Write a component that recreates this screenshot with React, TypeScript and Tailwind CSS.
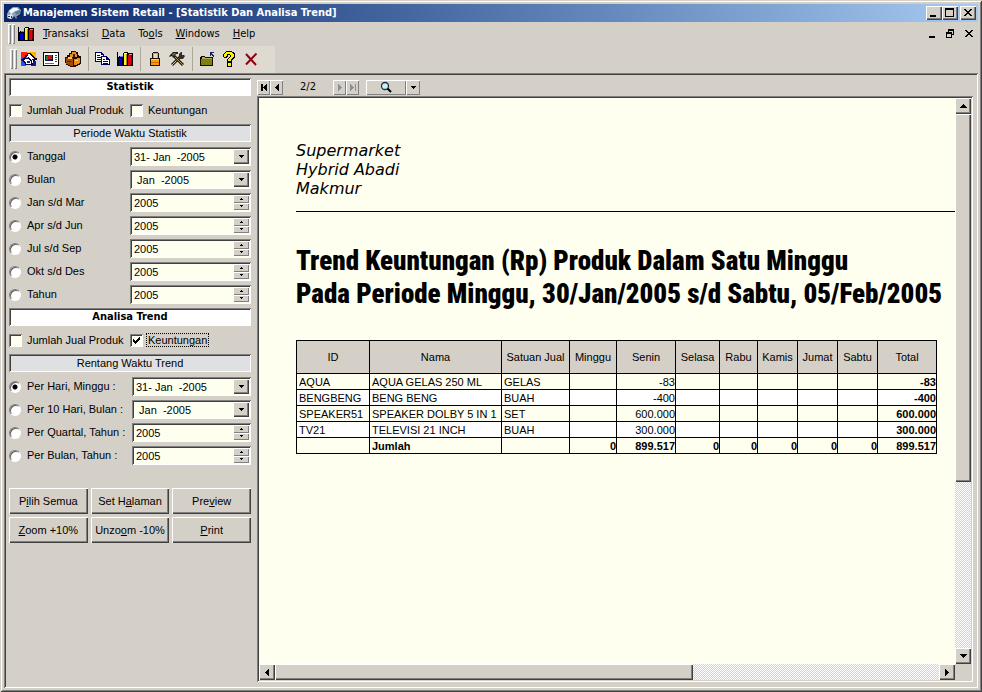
import { useState } from 'react'
import type { ReactNode } from 'react'
import clsx from 'clsx'

const raised =
  'bg-[#d4d0c8] shadow-[inset_1px_1px_0_#fff,inset_-1px_-1px_0_#404040,inset_-2px_-2px_0_#808080]'
const raisedThin = 'bg-[#d4d0c8] shadow-[inset_1px_1px_0_#fff,inset_-1px_-1px_0_#808080]'
const sunken =
  'shadow-[inset_1px_1px_0_#808080,inset_-1px_-1px_0_#fff,inset_2px_2px_0_#404040]'
const dither = 'bg-[repeating-conic-gradient(#ffffff_0_25%,#d4d0c8_0_50%)] bg-[length:2px_2px]'

const uiFont = "font-['Liberation_Sans',sans-serif]"
const menuFont = "font-['DejaVu_Sans_Condensed','DejaVu_Sans',sans-serif]"

/* ---------- icons ---------- */

function Glyph({ children, size = 16 }: { children: ReactNode; size?: number }) {
  return (
    <svg
      width={size}
      height={size}
      viewBox={`0 0 ${size} ${size}`}
      shapeRendering="crispEdges"
      className="shrink-0"
      aria-hidden="true"
    >
      {children}
    </svg>
  )
}

function Arrow({ dir, color = '#000' }: { dir: 'up' | 'down' | 'left' | 'right'; color?: string }) {
  const d = {
    up: 'M3 0h1v1h1v1h1v1h1v1H0V3h1V2h1V1h1z',
    down: 'M0 0h7v1H6v1H5v1H4v1H3V3H2V2H1V1H0z',
    left: 'M4 0v7H3V6H2V5H1V4H0V3h1V2h1V1h1V0z',
    right: 'M0 0v7h1V6h1V5h1V4h1V3H3V2H2V1H1V0z',
  }[dir]
  const wide = dir === 'up' || dir === 'down'
  return (
    <svg width={wide ? 7 : 4} height={wide ? 4 : 7} shapeRendering="crispEdges" aria-hidden="true">
      <path d={d} fill={color} />
    </svg>
  )
}

function SmallArrow({ dir }: { dir: 'up' | 'down' }) {
  return (
    <svg width="3" height="2" shapeRendering="crispEdges" aria-hidden="true">
      <path d={dir === 'up' ? 'M1 0h1v1h1v1H0V1h1z' : 'M0 0h3v1H2v1H1V1H0z'} fill="#000" />
    </svg>
  )
}

function SmallDrop() {
  return (
    <svg width="5" height="3" shapeRendering="crispEdges" aria-hidden="true">
      <path d="M0 0h5v1H4v1H3v1H2V2H1V1H0z" fill="#000" />
    </svg>
  )
}

function ChartIcon() {
  return (
    <Glyph>
      <path d="M0 1h1v13h15v1H0z" fill="#000" />
      <path d="M1 6l1-1h4v9H1z" fill="#000" />
      <path d="M2 7h3v7H2z" fill="#0000d0" />
      <path d="M3 5h3v1H3z" fill="#6080ff" />
      <path d="M6 2l1-1h4v13H6z" fill="#000" />
      <path d="M7 3h2v11H7z" fill="#ffee20" />
      <path d="M7 2h3v1H7z" fill="#fff8b0" />
      <path d="M9 3h1v11H9z" fill="#a09000" />
      <path d="M10 4l1-2h5v12h-6z" fill="#000" />
      <path d="M11 4h3v10h-3z" fill="#e00010" />
      <path d="M12 3h3v1h-3z" fill="#ff8080" />
      <path d="M14 4h1v9h-1z" fill="#800000" />
    </Glyph>
  )
}

function AppIcon() {
  return (
    <svg width="16" height="16" viewBox="0 0 16 16" className="shrink-0" aria-hidden="true">
      <path d="M1 9l2-4 4-3 5 0 3 3-1 4-3 2-3 0-2 3-5-1z" fill="#8fa6bc" />
      <path d="M3 6l4-3 4 0 2 2-4 1-4 3z" fill="#f4faff" />
      <path d="M9 7l5-2 0 3-4 2z" fill="#5f7892" />
      <path d="M2 10l4-1 1 2-2 3-3-1z" fill="#dfe8ee" />
      <path d="M2 11h2v1H2zM5 11h1v2H5z" fill="#25364c" />
      <path d="M8 11l2-1 1 3-1 1z" fill="#7d93a8" />
    </svg>
  )
}

function SalesIcon() {
  return (
    <Glyph>
      <path d="M0 1h6v5H0z" fill="#ff2010" />
      <path d="M6 1h9v6H6z" fill="#ffb400" />
      <path d="M0 6h5v9H0z" fill="#2050ff" />
      <path d="M10 10h5v5h-5z" fill="#102090" />
      <path d="M6 2h4v1h1v1h1v1h1v1h1v1h2v2h-2v1h-1v1h-1v3H4v-2H3v-1H2v-1H1V9H0V8h2V7h1V6h1V4h2z" fill="#000040" />
      <path d="M7 3h2v1h1v1h1v1h1v1h1v1h-2v1h1v3h-1V9h-1V8H9V7H8V6H6V5h1z" fill="#fff" />
      <path d="M4 8h4v1h1v1h1v3H5v-2H4v-1H3V9h1z" fill="#fff" />
      <path d="M6 10h3v2H6z" fill="#102090" />
      <path d="M5 6h2v1H5z" fill="#60a0ff" />
    </Glyph>
  )
}

function ReportIcon() {
  return (
    <Glyph>
      <path d="M0 1h16v14H0z" fill="#000" />
      <path d="M1 2h14v12H1z" fill="#fff" />
      <path d="M2 4h6v6H2z" fill="#202020" />
      <path d="M3 5h2v4H3z" fill="#208030" />
      <path d="M5 4h4v4H5z" fill="#d01020" />
      <path d="M5 8h4v2H5z" fill="#101080" />
      <path d="M9 4h1v6H9z" fill="#000" />
      <path d="M12 4h2v1h-2zM12 10h2v1h-2z" fill="#d01020" />
      <path d="M12 6h2v1h-2z" fill="#2040d0" />
      <path d="M12 8h2v1h-2z" fill="#208030" />
      <path d="M2 12h9v1H2z" fill="#606890" />
    </Glyph>
  )
}

function BagIcon() {
  return (
    <Glyph>
      <path d="M6 0h5v1h2v3h1v1h2v8h-1v1h-2v1h-2v1H5v-1H3v-1H1v-2H0V6h2V4h2V2h2z" fill="#1c0c00" />
      <path d="M7 1h4v2h1v3H5V3h2z" fill="#e09030" />
      <path d="M1 7h7v8H5v-1H3v-1H1z" fill="#a04c08" />
      <path d="M9 8h3V7h3v5h-1v1h-2v1H9z" fill="#e88c18" />
      <path d="M3 6h4v2H3z" fill="#f8c060" />
      <path d="M8 3h2v3H8z" fill="#502000" />
      <path d="M10 9h3v1h-3z" fill="#ffd070" />
      <path d="M2 10h4v1H2z" fill="#5c2400" />
    </Glyph>
  )
}

function CopyIcon() {
  return (
    <Glyph>
      <path d="M0 1h7v1h1v1h1v8H0z" fill="#000060" />
      <path d="M1 2h5v2h2v6H1z" fill="#fff" />
      <path d="M2 4h3v1H2zM2 6h4v1H2zM2 8h4v1H2z" fill="#000060" />
      <path d="M6 5h6v1h1v1h1v1h1v6H6z" fill="#000060" />
      <path d="M7 6h4v3h3v4H7z" fill="#fff" />
      <path d="M8 8h2v1H8zM8 10h5v1H8zM8 12h5v1H8z" fill="#000060" />
    </Glyph>
  )
}

function LockIcon() {
  return (
    <Glyph>
      <path d="M6 1h5v1h1v5h1v8H3V7h2V2h1z" fill="#201000" />
      <path d="M6 2h5v5H6z" fill="#e8a020" />
      <path d="M7 3h3v4H7z" fill="#dedad2" />
      <path d="M4 8h8v6H4z" fill="#ff9a00" />
      <path d="M4 8h8v1H4z" fill="#ffd060" />
      <path d="M4 11h8v1H4z" fill="#c87000" />
    </Glyph>
  )
}

function ToolsIcon() {
  return (
    <svg width="16" height="16" viewBox="0 0 16 16" className="shrink-0" aria-hidden="true">
      <path d="M3 14L11 6" stroke="#202020" strokeWidth="3" />
      <path d="M3 14L11 6" stroke="#c8c8b8" strokeWidth="1" />
      <path d="M10 7V3l2-2h1v3h2l1 1-2 3h-3z" fill="#303028" />
      <path d="M5 5l9 9" stroke="#302400" strokeWidth="3" />
      <path d="M6 6l8 8" stroke="#a89050" strokeWidth="1" />
      <path d="M0 6l1-2 3-3h5v2H7L4 7 3 5z" fill="#202020" />
      <path d="M3 3l2-1h2L4 5z" fill="#707058" />
    </svg>
  )
}

function FolderUpIcon() {
  return (
    <Glyph>
      <path d="M2 5h4v1h8v9H1V6h1z" fill="#101000" />
      <path d="M3 6h3v1h7v1H3z" fill="#b0b050" />
      <path d="M2 8h11v6H2z" fill="#808010" />
      <path d="M11 1h4v1h-2v1h1v1h1v2h-1V5h-1V4h-1v1h-1z" fill="#102070" />
    </Glyph>
  )
}

function HelpIcon() {
  return (
    <Glyph>
      <path d="M5 0h6v1h2v1h1v5h-1v1h-1v1h-1v2H6V8h1V7h1V6h1V4H7v2H6v1H3V6H2V3h1V2h1V1h1z" fill="#000" />
      <path d="M5 1h6v1h1v1h1v3h-1v1h-1v1h-1v2H7V8h1V7h1V6h1V4H9V3H6v2H5v1H3V3h1V2h1z" fill="#fff000" />
      <path d="M6 11h5v5H6z" fill="#000" />
      <path d="M7 12h3v3H7z" fill="#fff000" />
    </Glyph>
  )
}

function ExitIcon() {
  return (
    <svg width="16" height="16" viewBox="0 0 16 16" className="shrink-0" aria-hidden="true">
      <path d="M3 3l10 11M13.500 2.500L3 13.500" stroke="#900010" strokeWidth="2" fill="none" />
    </svg>
  )
}

function MinimizeIcon() {
  return (
    <Glyph size={10}>
      <path d="M1 7h6v2H1z" fill="#000" />
    </Glyph>
  )
}

function MaximizeIcon() {
  return (
    <Glyph size={10}>
      <path d="M0 0h9v9H0zM1 2v6h7V2z" fill="#000" fillRule="evenodd" />
    </Glyph>
  )
}

function RestoreIcon() {
  return (
    <Glyph size={10}>
      <path d="M2 0h6v6H6V5h1V2H3v1H2zM0 3h6v6H0zM1 5v3h4V5z" fill="#000" fillRule="evenodd" />
    </Glyph>
  )
}

function CloseIcon() {
  return (
    <Glyph size={10}>
      <path
        d="M1 1h2v1h1v1h2V2h1V1h2v1H8v1H7v1H6v1h1v1h1v1h1v1H7V7H6V6H4v1H3v1H1V7h1V6h1V5h1V4H3V3H2V2H1z"
        fill="#000"
      />
    </Glyph>
  )
}

function MagnifierIcon() {
  return (
    <svg width="12" height="12" viewBox="0 0 12 12" aria-hidden="true">
      <circle cx="5" cy="5" r="3.5" fill="#c8f4f8" stroke="#203040" strokeWidth="1.3" />
      <path d="M7.5 7.5l3.5 3.5" stroke="#000" strokeWidth="2" />
    </svg>
  )
}

/* ---------- window chrome ---------- */

// "&" marks the letter that is underlined as shortcut
function Mnemonic({ text }: { text: string }) {
  const [before, after] = text.split('&')
  return (
    <>
      {before}
      <span className="underline underline-offset-1">{after[0]}</span>
      {after.slice(1)}
    </>
  )
}

function Gripper() {
  return (
    <div className="flex h-5 shrink-0 gap-px" aria-hidden="true">
      <span className={clsx('w-[3px]', raisedThin)} />
      <span className={clsx('w-[3px]', raisedThin)} />
    </div>
  )
}

function TitleBar() {
  const btn = clsx('flex h-[14px] w-4 items-center justify-center', raised)
  return (
    <header className="flex h-[18px] shrink-0 items-center bg-linear-to-r from-[#0a246a] to-[#a6caf0] px-0.5">
      <AppIcon />
      <h1 className={clsx('ml-px flex-1 text-[11px] leading-4 font-bold whitespace-nowrap text-white', menuFont)}>
        Manajemen Sistem Retail - [Statistik Dan Analisa Trend]
      </h1>
      <button className={btn} aria-label="Minimize"><MinimizeIcon /></button>
      <button className={btn} aria-label="Maximize"><MaximizeIcon /></button>
      <button className={clsx('ml-0.5', btn)} aria-label="Close"><CloseIcon /></button>
    </header>
  )
}

const menus = ['&Transaksi', '&Data', 'To&ols', '&Windows', '&Help']

function MenuBar() {
  return (
    <nav className="flex h-6 shrink-0 items-center pl-1">
      <Gripper />
      <span className="mr-[9px] ml-[3px]"><ChartIcon /></span>
      <div className={clsx('flex flex-1 gap-[13px] text-[11px] leading-4', menuFont)}>
        {menus.map((m) => (
          <button key={m}><Mnemonic text={m} /></button>
        ))}
      </div>
      <div className="flex gap-2 pr-1">
        <button aria-label="Minimize document"><MinimizeIcon /></button>
        <button aria-label="Restore document"><RestoreIcon /></button>
        <button aria-label="Close document"><CloseIcon /></button>
      </div>
    </nav>
  )
}

const toolGroups = [
  [
    { label: 'Penjualan', icon: <SalesIcon /> },
    { label: 'Laporan', icon: <ReportIcon /> },
    { label: 'Produk', icon: <BagIcon /> },
  ],
  [
    { label: 'Salin', icon: <CopyIcon /> },
    { label: 'Statistik', icon: <ChartIcon /> },
  ],
  [
    { label: 'Kunci', icon: <LockIcon /> },
    { label: 'Peralatan', icon: <ToolsIcon /> },
  ],
  [
    { label: 'Buka', icon: <FolderUpIcon /> },
    { label: 'Bantuan', icon: <HelpIcon /> },
    { label: 'Keluar', icon: <ExitIcon /> },
  ],
]

function ToolBar() {
  return (
    <div className="flex h-[27px] shrink-0 pl-0.5">
      <div className="flex items-center bg-[#dedad2] pr-4 pb-0.5 pl-1">
        <Gripper />
        <div className="ml-1 flex items-center">
          {toolGroups.map((group, i) => (
            <div
              key={i}
              className={clsx('flex items-center gap-1.5', i > 0 && 'ml-[7px] border-l border-[#aca899] pl-1.5')}
            >
              {group.map((t) => (
                <button key={t.label} className="my-1" aria-label={t.label}>{t.icon}</button>
              ))}
            </div>
          ))}
        </div>
      </div>
    </div>
  )
}

/* ---------- side panel ---------- */

function Caption({ children, strong }: { children: ReactNode; strong?: boolean }) {
  return (
    <h2
      className={clsx(
        'h-[18px] text-center leading-[18px]',
        sunken,
        strong ? clsx('bg-white font-bold', menuFont) : 'bg-[#dfe0e1]',
      )}
    >
      {children}
    </h2>
  )
}

function Check({ label, initial = false, focused }: { label: string; initial?: boolean; focused?: boolean }) {
  const [on, setOn] = useState(initial)
  return (
    <label className="flex items-center gap-[3px]">
      <span className="grid place-items-center">
        <input
          type="checkbox"
          checked={on}
          onChange={() => setOn(!on)}
          className={clsx('col-start-1 row-start-1 size-[13px] appearance-none bg-[#fffff0]', sunken)}
        />
        {on && (
          <svg
            width="7"
            height="7"
            shapeRendering="crispEdges"
            className="pointer-events-none col-start-1 row-start-1"
            aria-hidden="true"
          >
            <path d="M0 2h1v1h1v1h1V3h1V2h1V1h1V0h1v3H6v1H5v1H4v1H3v1H2V6H1V5H0z" fill="#000" />
          </svg>
        )}
      </span>
      <span
        className={clsx(
          'border border-dotted px-px leading-3 whitespace-nowrap',
          focused ? 'border-black' : 'border-transparent',
        )}
      >
        {label}
      </span>
    </label>
  )
}

function CheckRow({ trend }: { trend?: boolean }) {
  return (
    <div className="grid h-7 grid-cols-2 items-center">
      <Check label="Jumlah Jual Produk" />
      <Check label="Keuntungan" initial={trend} focused={trend} />
    </div>
  )
}

function DateField({ label, value }: { label: string; value: string }) {
  return (
    <div className={clsx('flex h-[19px] bg-[#fffff0] p-0.5', sunken)}>
      <select aria-label={label} className="w-0 min-w-0 flex-1 appearance-none pt-0.5 pl-0.5 leading-[13px]">
        <option>{value}</option>
      </select>
      <span className={clsx('flex w-4 items-center justify-center', raised)}>
        <SmallDrop />
      </span>
    </div>
  )
}

function YearField({ label }: { label: string }) {
  const [year, setYear] = useState(2005)
  const btn = clsx('flex flex-1 items-center justify-center', raisedThin)
  return (
    <div className={clsx('flex h-[19px] bg-[#fffff0] p-0.5', sunken)}>
      <input
        type="text"
        aria-label={label}
        value={year}
        onChange={(e) => setYear(Number(e.target.value) || 0)}
        className="w-0 min-w-0 flex-1 pt-0.5 pl-0.5 leading-[13px]"
      />
      <span className="flex w-4 flex-col">
        <button className={btn} aria-label="Naik" onClick={() => setYear(year + 1)}><SmallArrow dir="up" /></button>
        <button className={btn} aria-label="Turun" onClick={() => setYear(year - 1)}><SmallArrow dir="down" /></button>
      </span>
    </div>
  )
}

type Period = { label: string; date?: string }

const statistik: Period[] = [
  { label: 'Tanggal', date: '31- Jan \u00a0-2005' },
  { label: 'Bulan', date: '\u00a0Jan \u00a0-2005' },
  { label: 'Jan s/d Mar' },
  { label: 'Apr s/d Jun' },
  { label: 'Jul s/d Sep' },
  { label: 'Okt s/d Des' },
  { label: 'Tahun' },
]

const trend: Period[] = [
  { label: 'Per Hari, Minggu :', date: '31- Jan \u00a0-2005' },
  { label: 'Per 10 Hari, Bulan :', date: '\u00a0Jan \u00a0-2005' },
  { label: 'Per Quartal, Tahun :' },
  { label: 'Per Bulan, Tahun :' },
]

function PeriodList({ name, items }: { name: string; items: Period[] }) {
  const [picked, setPicked] = useState(0)
  return (
    <div className="mt-[3px]">
      {items.map((p, i) => (
        <div key={p.label} className="flex h-[23px] items-center">
          <label
            className={clsx(
              'flex shrink-0 items-center gap-1.5 whitespace-nowrap',
              name === 'trend' ? 'w-[123px]' : 'w-[121px]',
            )}
          >
            <input
              type="radio"
              name={name}
              checked={picked === i}
              onChange={() => setPicked(i)}
              className="size-3 appearance-none rounded-full border border-[#808080] border-r-white border-b-white bg-white shadow-[inset_1px_1px_0_#606060] checked:bg-[radial-gradient(circle,#000_2px,#fff_3px)]"
            />
            {p.label}
          </label>
          <div className="min-w-0 flex-1">
            {p.date ? <DateField label={p.label} value={p.date} /> : <YearField label={p.label} />}
          </div>
        </div>
      ))}
    </div>
  )
}

const actions = ['P&ilih Semua', 'Set H&alaman', 'Pre&view', '&Zoom +10%', 'Unzo&om -10%', '&Print']

function SidePanel() {
  return (
    <aside className="w-[242px] shrink-0">
      <Caption strong>Statistik</Caption>
      <CheckRow />
      <Caption>Periode Waktu Statistik</Caption>
      <PeriodList name="statistik" items={statistik} />
      <div className="mt-0.5">
        <Caption strong>Analisa Trend</Caption>
      </div>
      <CheckRow trend />
      <Caption>Rentang Waktu Trend</Caption>
      <PeriodList name="trend" items={trend} />
      <div className="mt-[21px] grid grid-cols-3 gap-[3px]">
        {actions.map((a) => (
          <button key={a} className={clsx('h-[26px] whitespace-nowrap', raised)}>
            <Mnemonic text={a} />
          </button>
        ))}
      </div>
    </aside>
  )
}

/* ---------- report ---------- */

const columns = [
  { title: 'ID', width: 'w-[73px]' },
  { title: 'Nama', width: 'w-[132px]' },
  { title: 'Satuan Jual', width: 'w-[68px]' },
  { title: 'Minggu', width: 'w-[47px]' },
  { title: 'Senin', width: 'w-[59px]' },
  { title: 'Selasa', width: 'w-[44px]' },
  { title: 'Rabu', width: 'w-[38px]' },
  { title: 'Kamis', width: 'w-[40px]' },
  { title: 'Jumat', width: 'w-[40px]' },
  { title: 'Sabtu', width: 'w-[40px]' },
  { title: 'Total', width: 'w-[59px]' },
]

const rows = [
  ['AQUA', 'AQUA GELAS 250 ML', 'GELAS', '', '-83', '', '', '', '', '', '-83'],
  ['BENGBENG', 'BENG BENG', 'BUAH', '', '-400', '', '', '', '', '', '-400'],
  ['SPEAKER51', 'SPEAKER DOLBY 5 IN 1', 'SET', '', '600.000', '', '', '', '', '', '600.000'],
  ['TV21', 'TELEVISI 21 INCH', 'BUAH', '', '300.000', '', '', '', '', '', '300.000'],
]

const totals = ['', 'Jumlah', '', '0', '899.517', '0', '0', '0', '0', '0', '899.517']

function ReportTable() {
  const cell = 'h-4 border-r border-b border-black p-0 pt-px leading-[14px] whitespace-nowrap'
  const align = (i: number) => (i < 3 ? 'pl-0.5 text-left' : 'text-right')
  return (
    <table className="w-[641px] table-fixed border-separate border-spacing-0 border-t border-l border-black">
      <thead>
        <tr className="bg-[#d4d0c8]">
          {columns.map((c) => (
            <th
              key={c.title}
              className={clsx('h-[33px] border-r border-b border-black p-0 font-normal whitespace-nowrap', c.width)}
            >
              {c.title}
            </th>
          ))}
        </tr>
      </thead>
      <tbody>
        {rows.map((row, r) => (
          <tr key={row[0]} className={r % 2 ? 'bg-white' : ''}>
            {row.map((v, i) => (
              <td key={i} className={clsx(cell, align(i), i === 10 && 'font-bold')}>{v}</td>
            ))}
          </tr>
        ))}
      </tbody>
      <tfoot>
        <tr className="font-bold">
          {totals.map((v, i) => (
            <td key={i} className={clsx(cell, align(i))}>{v}</td>
          ))}
        </tr>
      </tfoot>
    </table>
  )
}

function Report() {
  return (
    <article className="min-w-0 flex-1 overflow-hidden bg-[#fffff0] pt-[43px] pl-[37px]">
      <address className="font-['DejaVu_Sans',sans-serif] text-base leading-[19px] italic">
        Supermarket
        <br />
        Hybrid Abadi
        <br />
        Makmur
      </address>
      <hr className="mt-[13px] border-black" />
      <h2 className="mt-[33px] font-['Roboto_Condensed','Liberation_Sans_Narrow',sans-serif] text-[27px] leading-[33px] font-black whitespace-nowrap">
        Trend Keuntungan (Rp) Produk Dalam Satu Minggu
        <br />
        Pada Periode Minggu, 30/Jan/2005 s/d Sabtu, 05/Feb/2005
      </h2>
      <div className="mt-[29px]">
        <ReportTable />
      </div>
    </article>
  )
}

function PagerBar() {
  const btn = clsx('flex h-[15px] w-[13px] items-center justify-center', raisedThin)
  return (
    <div className="flex h-[18px] items-center">
      <button className={btn} aria-label="Halaman pertama">
        <span className="h-[7px] w-0.5 bg-black" /><Arrow dir="left" />
      </button>
      <button className={btn} aria-label="Halaman sebelumnya"><Arrow dir="left" /></button>
      <span className={clsx('w-[50px] text-center', menuFont)}>2/2</span>
      <button className={btn} aria-label="Halaman berikutnya"><Arrow dir="right" color="#909090" /></button>
      <button className={btn} aria-label="Halaman terakhir">
        <Arrow dir="right" color="#909090" /><span className="ml-px h-[7px] w-px bg-[#909090]" />
      </button>
      <button className={clsx('ml-[7px] flex h-[15px] w-10 items-center justify-center', raisedThin)} aria-label="Zoom">
        <MagnifierIcon />
      </button>
      <button className={clsx('flex h-[15px] w-[14px] items-center justify-center', raisedThin)} aria-label="Pilihan zoom">
        <SmallDrop />
      </button>
    </div>
  )
}

function Preview() {
  const btn = clsx('flex size-4 shrink-0 items-center justify-center', raised)
  return (
    <main className="flex min-w-0 flex-1 flex-col">
      <PagerBar />
      <div className={clsx('flex min-h-0 flex-1 flex-col p-0.5', sunken)}>
        <div className="flex min-h-0 flex-1">
          <Report />
          <div className={clsx('flex w-4 flex-col', dither)}>
            <button className={btn} aria-label="Gulir ke atas"><Arrow dir="up" /></button>
            <div className="min-h-0 flex-1">
              <div className={clsx('h-[69%]', raised)} />
            </div>
            <button className={btn} aria-label="Gulir ke bawah"><Arrow dir="down" /></button>
          </div>
        </div>
        <div className="flex h-4 shrink-0">
          <div className={clsx('flex flex-1', dither)}>
            <button className={btn} aria-label="Gulir ke kiri"><Arrow dir="left" /></button>
            <div className="flex flex-1">
              <div className={clsx('w-[63%]', raised)} />
            </div>
            <button className={btn} aria-label="Gulir ke kanan"><Arrow dir="right" /></button>
          </div>
          <div className="w-4 bg-[#d4d0c8]" />
        </div>
      </div>
    </main>
  )
}

export default function App() {
  return (
    <div
      className={clsx(
        'flex h-screen flex-col bg-[#d4d0c8] p-1 text-[11px] text-black',
        'shadow-[inset_1px_1px_0_#d4d0c8,inset_-1px_-1px_0_#404040,inset_2px_2px_0_#fff,inset_-2px_-2px_0_#808080]',
        uiFont,
      )}
    >
      <TitleBar />
      <MenuBar />
      <ToolBar />
      <div className={clsx('flex min-h-0 flex-1 gap-[6px] px-[5px] pt-[5px] pb-[6px]', sunken)}>
        <SidePanel />
        <Preview />
      </div>
    </div>
  )
}
